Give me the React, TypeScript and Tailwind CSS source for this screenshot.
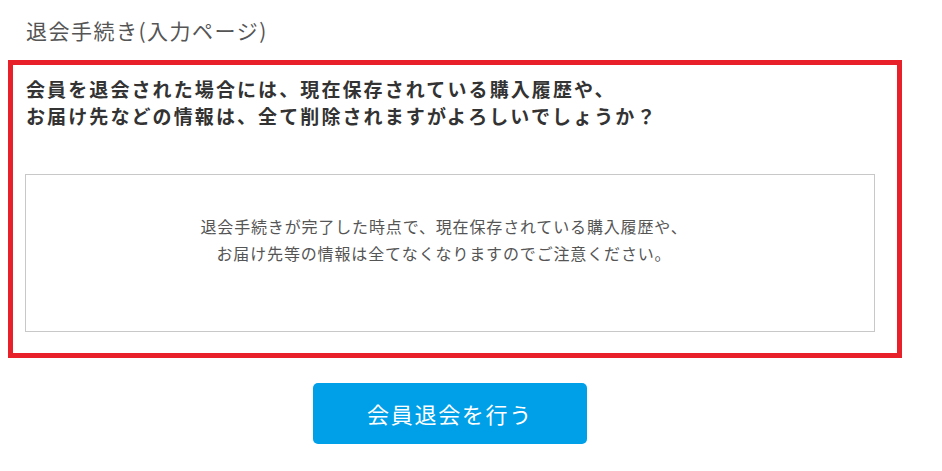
export default function App() {
  return (
    <div className="w-[942px] h-[471px] bg-white font-['Noto_Sans_CJK_JP',sans-serif] overflow-hidden">
      <h1 className="pl-[26px] pt-[15px] text-[21px] leading-[30px] tracking-[1.5px] text-[#555] font-normal">
        退会手続き(入力ページ)
      </h1>
      <div className="ml-[8px] mt-[15px] w-[894px] h-[298px] border-[5px] border-[#e8202a] pl-[12px] pt-[10px]">
        <p className="pl-[1px] text-[19px] leading-[27px] tracking-[2.1px] font-bold text-[#333]">
          会員を退会された場合には、現在保存されている購入履歴や、
          <br />
          お届け先などの情報は、全て削除されますがよろしいでしょうか？
        </p>
        <div className="mt-[45px] w-[850px] h-[158px] border border-[#c8c8c8] pt-[38px] pr-[12px]">
          <p className="text-center text-[16px] leading-[27px] tracking-[0.85px] text-[#555]">
            退会手続きが完了した時点で、現在保存されている購入履歴や、
            <br />
            お届け先等の情報は全てなくなりますのでご注意ください。
          </p>
        </div>
      </div>
      <div className="flex justify-center mt-[25px] pr-[42px]">
        <button className="w-[274px] h-[61px] rounded-[5px] bg-[#00a0e9] text-white text-[22px] tracking-[1.7px]">
          会員退会を行う
        </button>
      </div>
    </div>
  )
}
